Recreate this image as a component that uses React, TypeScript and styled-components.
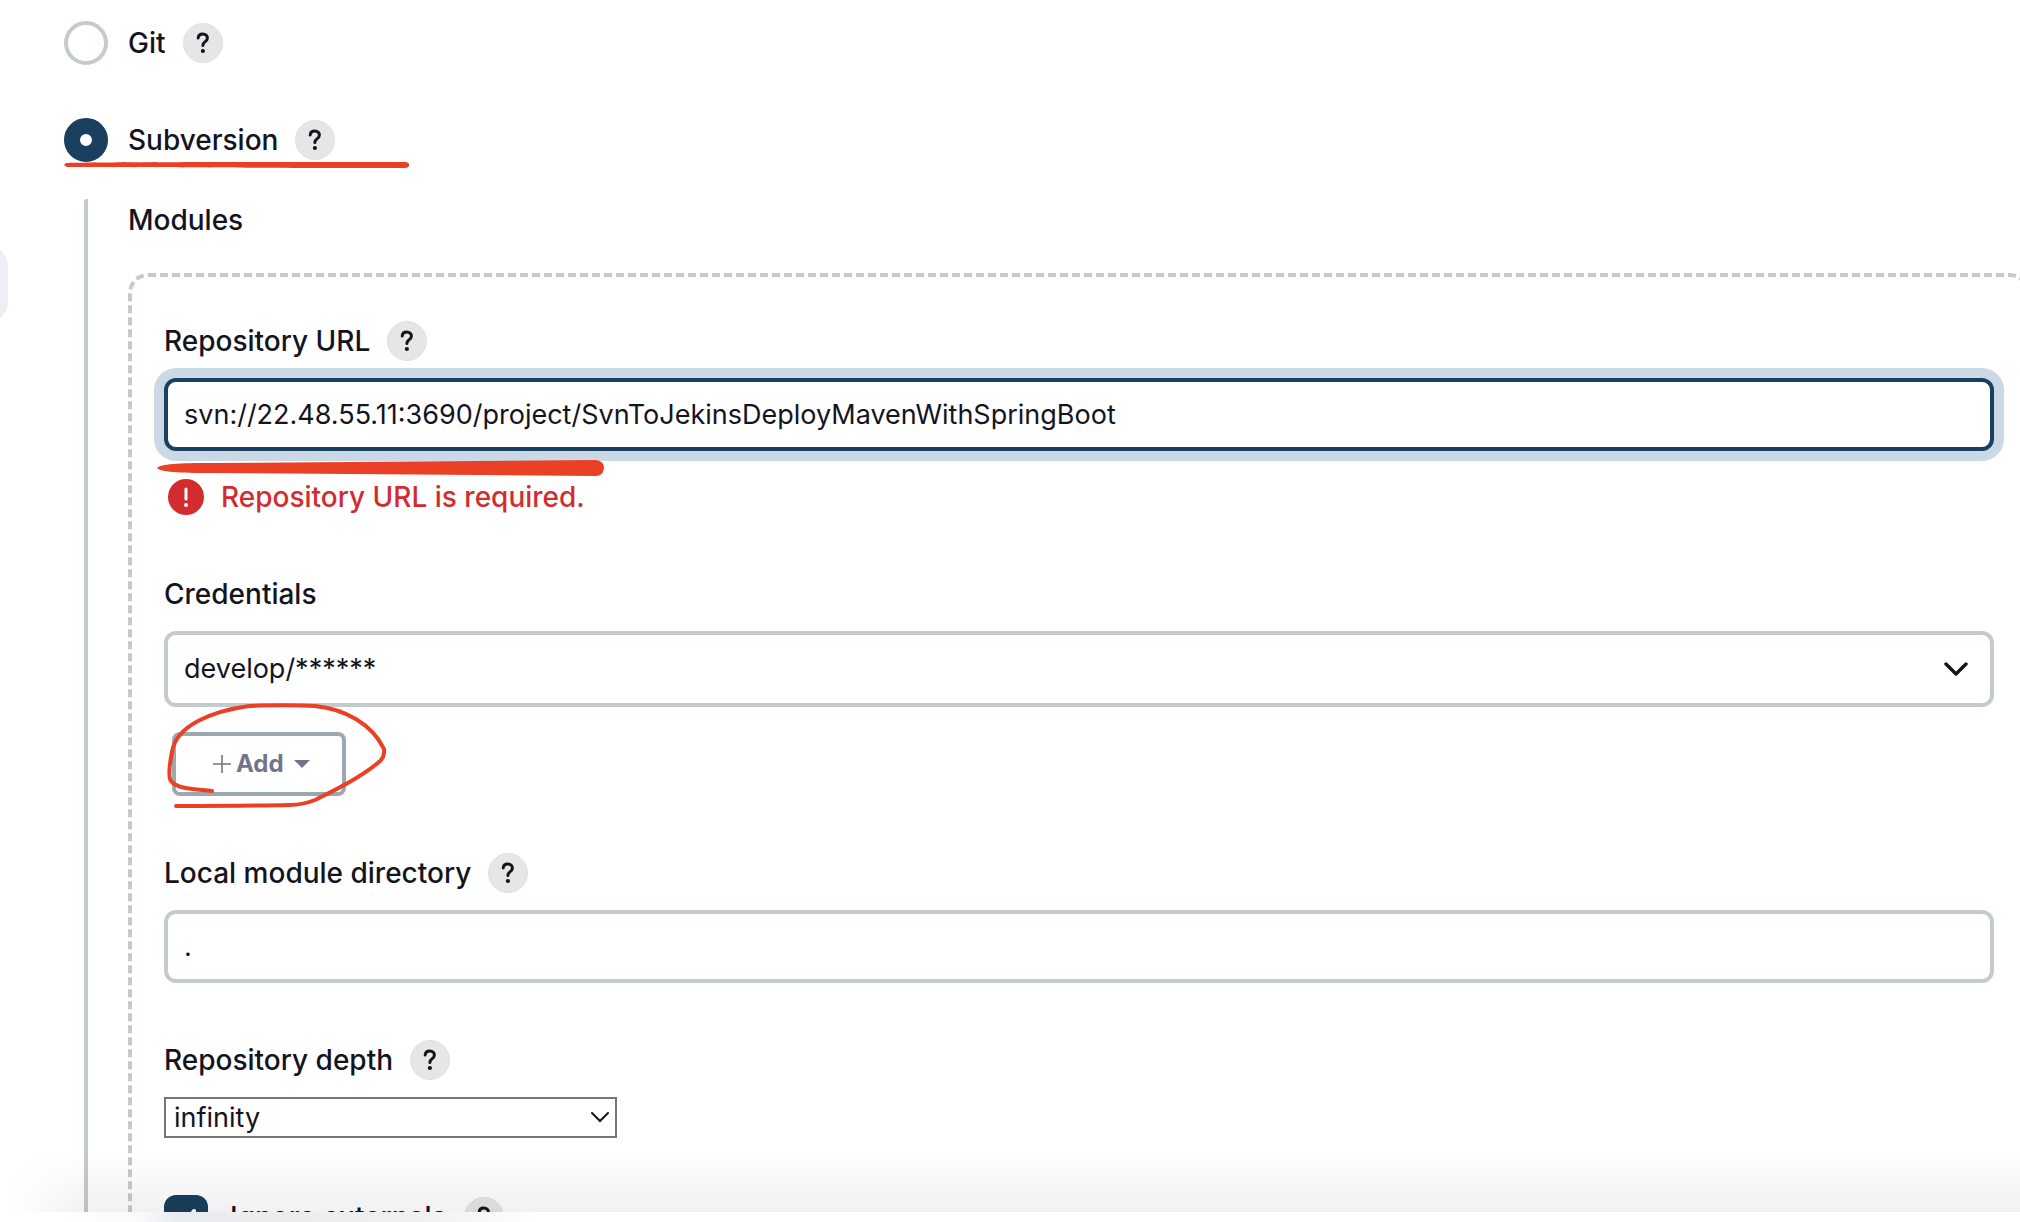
import React from "react";
import styled, { createGlobalStyle, css } from "styled-components";

const ink = "#14141f";
const line = "#c4cbcf";
const navy = "#1b3f5e";
const marker = "#ea4025";

const GlobalStyle = createGlobalStyle`
  *, *::before, *::after { box-sizing: border-box; }
  body {
    margin: 0;
    background: #fff;
    color: ${ink};
    font-family: Inter, "Liberation Sans", sans-serif;
    font-size: 28px;
    line-height: 40px;
  }
  input, select, button { font: inherit; color: inherit; margin: 0; }
`;

const Page = styled.div`
  display: flex;
  flex-direction: column;
  height: 100vh;
  overflow: hidden;
`;

const Viewport = styled.main`
  position: relative;
  flex: 1;
  min-height: 0;
  overflow: hidden;
  padding: 21px 0 0 64px;
`;

const SideHandle = styled.div`
  position: absolute;
  left: -32px;
  top: 246px;
  width: 40px;
  height: 76px;
  border-radius: 20px;
  background: #eeeef4;
`;

const OptionList = styled.div`
  display: flex;
  flex-direction: column;
  gap: 53px;
`;

const OptionRow = styled.div`
  display: flex;
  align-items: center;
  height: 44px;
`;

const OptionLabel = styled.label`
  display: flex;
  align-items: center;
  gap: 20px;
  font-weight: 500;
`;

const Radio = styled.input`
  appearance: none;
  width: 44px;
  height: 44px;
  border: 4px solid ${line};
  border-radius: 50%;
  background: #fff;
  &:checked {
    border: 16px solid ${navy};
  }
`;

const HelpButton = styled.button`
  display: inline-flex;
  align-items: center;
  justify-content: center;
  flex: none;
  width: 40px;
  height: 40px;
  margin-left: 17px;
  padding: 0;
  border: 1px solid #e0e0e0;
  border-radius: 50%;
  background: #e6e6e6;
`;

const Nested = styled.section`
  margin: 37px -10px 0 20px;
  padding-left: 40px;
  border-left: 4px solid ${line};
  border-top-left-radius: 2px;
`;

const SectionTitle = styled.h2`
  margin: 0 0 32px;
  font-size: 28px;
  line-height: 42px;
  font-weight: 500;
`;

const Module = styled.div`
  display: flex;
  flex-direction: column;
  gap: 57px;
  padding: 44px 32px 80px;
  border: 4px dashed ${line};
  border-radius: 20px;
`;

const Field = styled.div`
  display: flex;
  flex-direction: column;
  align-items: flex-start;
`;

const LabelRow = styled.div`
  display: flex;
  align-items: center;
  height: 40px;
  margin-bottom: 17px;
  font-weight: 500;
`;

const control = css`
  width: 100%;
  padding: 0 16px;
  border: 4px solid ${line};
  border-radius: 12px;
  background: #fff;
  outline: none;
  font-size: 27px;
`;

const TextInput = styled.input<{ $active?: boolean }>`
  ${control}
  height: 73px;
  ${(p) =>
    p.$active &&
    css`
      border-color: ${navy};
      box-shadow: 0 0 0 10px #cbd8e5;
    `}
`;

const ErrorLine = styled.p`
  display: flex;
  align-items: center;
  gap: 17px;
  height: 40px;
  margin: 26px 0 0 4px;
  color: #d32c2f;
  font-weight: 500;
`;

const SelectWrap = styled.div`
  position: relative;
  width: 100%;
`;

const SelectIcon = styled.svg<{ $right: number }>`
  position: absolute;
  right: ${(p) => p.$right}px;
  top: 0;
  height: 100%;
  pointer-events: none;
`;

const WideSelect = styled.select`
  ${control}
  display: block;
  appearance: none;
  height: 76px;
`;

const CompactWrap = styled(SelectWrap)`
  width: 453px;
`;

const CompactSelect = styled.select`
  display: block;
  appearance: none;
  width: 100%;
  height: 41px;
  padding: 0 8px;
  border: 2px solid #767676;
  border-radius: 0;
  background: #fff;
  font-size: 27px;
  line-height: 36px;
`;

const AddButton = styled.button`
  display: flex;
  align-items: center;
  height: 64px;
  margin: 25px 0 0 8px;
  padding: 0 32px 0 37px;
  border: 4px solid #9ba8ad;
  border-radius: 8px;
  background: #fff;
  color: #73738c;
  font-size: 24px;
  font-weight: 700;
`;

const AddPlus = styled.svg`
  margin-right: 5px;
`;

const AddCaret = styled.svg`
  margin-left: 10px;
`;

const CheckLabel = styled.label`
  display: flex;
  align-items: center;
  gap: 22px;
  font-weight: 500;
`;

const CheckBox = styled.span`
  position: relative;
  display: block;
  width: 44px;
  height: 44px;
`;

const CheckInput = styled.input`
  appearance: none;
  display: block;
  width: 44px;
  height: 44px;
  border-radius: 12px;
  background: ${navy};
`;

const CheckMark = styled.svg`
  position: absolute;
  inset: 0;
  pointer-events: none;
`;

const BottomShade = styled.div`
  position: absolute;
  left: 0;
  right: 0;
  bottom: 0;
  height: 60px;
  background: linear-gradient(to bottom, rgba(0, 0, 0, 0), rgba(0, 0, 0, 0.055));
  mask-image: linear-gradient(to right, transparent 8px, #000 90px);
  pointer-events: none;
`;

const BottomBar = styled.footer`
  flex: none;
  height: 10px;
  background: linear-gradient(to right, #fff 60px, #f8fafb 140px, #e8ecf0 180px, #ececec 300px, #f0f0f0 420px, #fff 540px);
`;

const Markup = styled.svg`
  position: absolute;
  left: 0;
  top: 0;
  pointer-events: none;
`;

const Help = ({ topic }: { topic: string }) => (
  <HelpButton type="button" aria-label={`Help for ${topic}`}>
    <svg width="14" height="22" viewBox="0 0 14 22" fill="none" aria-hidden="true">
      <path d="M2.2 6C2.4 3.3 4.3 1.9 6.8 1.9C9.5 1.9 11.4 3.6 11.4 5.9C11.4 7.8 10.4 8.8 8.9 9.9C7.4 10.9 6.9 11.7 6.9 13.6" stroke={ink} strokeWidth="3" strokeLinecap="round" />
      <circle cx="6.9" cy="19" r="2.1" fill={ink} />
    </svg>
  </HelpButton>
);

export default function App() {
  return (
    <>
      <GlobalStyle />
      <Page>
        <Viewport>
          <SideHandle />
          <OptionList>
            <OptionRow>
              <OptionLabel>
                <Radio type="radio" name="scm" />
                Git
              </OptionLabel>
              <Help topic="Git" />
            </OptionRow>
            <OptionRow>
              <OptionLabel>
                <Radio type="radio" name="scm" defaultChecked />
                Subversion
              </OptionLabel>
              <Help topic="Subversion" />
            </OptionRow>
          </OptionList>

          <Nested>
            <SectionTitle>Modules</SectionTitle>
            <Module>
              <Field>
                <LabelRow>
                  <label htmlFor="url">Repository URL</label>
                  <Help topic="Repository URL" />
                </LabelRow>
                <TextInput
                  id="url"
                  $active
                  spellCheck={false}
                  defaultValue="svn://22.48.55.11:3690/project/SvnToJekinsDeployMavenWithSpringBoot"
                />
                <ErrorLine>
                  <svg width="36" height="36" viewBox="0 0 36 36" aria-hidden="true">
                    <circle cx="18" cy="18" r="18" fill="#d32c2f" />
                    <path d="M18 10V20" stroke="#fff" strokeWidth="3" strokeLinecap="round" />
                    <circle cx="18" cy="26" r="2" fill="#fff" />
                  </svg>
                  Repository URL is required.
                </ErrorLine>
              </Field>

              <Field>
                <LabelRow>
                  <label htmlFor="credentials">Credentials</label>
                </LabelRow>
                <SelectWrap>
                  <WideSelect id="credentials">
                    <option>develop/******</option>
                  </WideSelect>
                  <SelectIcon $right={26} width="24" viewBox="0 0 24 76" aria-hidden="true">
                    <path d="M2 33L12 43L22 33" fill="none" stroke={ink} strokeWidth="3.4" strokeLinecap="round" strokeLinejoin="round" />
                  </SelectIcon>
                </SelectWrap>
                <AddButton type="button">
                  <AddPlus width="18" height="18" viewBox="0 0 18 18" aria-hidden="true">
                    <path d="M9 0V18M0 9H18" stroke="#73738c" strokeWidth="1.6" />
                  </AddPlus>
                  Add
                  <AddCaret width="16" height="8" viewBox="0 0 16 8" aria-hidden="true">
                    <path d="M0 0H16L8 8Z" fill="#73738c" />
                  </AddCaret>
                </AddButton>
              </Field>

              <Field>
                <LabelRow>
                  <label htmlFor="local">Local module directory</label>
                  <Help topic="Local module directory" />
                </LabelRow>
                <TextInput id="local" defaultValue="." />
              </Field>

              <Field>
                <LabelRow>
                  <label htmlFor="depth">Repository depth</label>
                  <Help topic="Repository depth" />
                </LabelRow>
                <CompactWrap>
                  <CompactSelect id="depth">
                    <option>infinity</option>
                  </CompactSelect>
                  <SelectIcon $right={8} width="18" viewBox="0 0 18 41" aria-hidden="true">
                    <path d="M1 16L9 24L17 16" fill="none" stroke={ink} strokeWidth="2" strokeLinecap="round" />
                  </SelectIcon>
                </CompactWrap>
              </Field>

              <OptionRow>
                <CheckLabel>
                  <CheckBox>
                    <CheckInput type="checkbox" defaultChecked />
                    <CheckMark width="44" height="44" viewBox="0 0 44 44" aria-hidden="true">
                      <path d="M13 23L20 30L30 16" fill="none" stroke="#fff" strokeWidth="4" strokeLinecap="round" strokeLinejoin="round" />
                    </CheckMark>
                  </CheckBox>
                  Ignore externals
                </CheckLabel>
                <Help topic="Ignore externals" />
              </OptionRow>
            </Module>
          </Nested>

          <BottomShade />
          <Markup width="640" height="840" viewBox="0 0 640 840" aria-hidden="true">
            <path d="M66 163C100 162 300 162 406 162Q410 163 409 166Q408 168 405 168C300 168 110 167 67 167Q62 165 66 163Z" fill={marker} />
            <path d="M157 468C160 464 180 463 210 463L596 460Q604 461 604 468Q603 476 596 476L210 473C180 473 160 472 157 468Z" fill={marker} />
            <path d="M212 791C195 789 177 789 171 781C168 777 170 762 172 752C176 725 213 711 249 706C265 705 300 705 315 706C345 709 372 724 384 749Q385 757 379 762C360 778 335 790 315 800C305 804 300 805 290 805C250 806 210 806 176 806" fill="none" stroke={marker} strokeWidth="4" strokeLinecap="round" strokeLinejoin="round" />
          </Markup>
        </Viewport>
        <BottomBar />
      </Page>
    </>
  );
}
